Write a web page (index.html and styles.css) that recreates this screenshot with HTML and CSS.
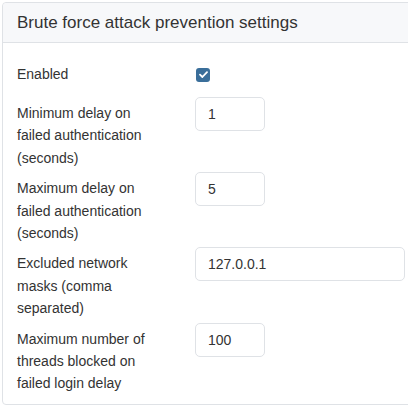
FILE: index.html
```html
<!DOCTYPE html>
<html lang="en">
<head>
<meta charset="utf-8">
<title>Brute force attack prevention settings</title>
<link rel="stylesheet" href="styles.css">
</head>
<body>
<div class="card">
  <div class="card-header">Brute force attack prevention settings</div>
  <div class="card-body">
    <div class="row row-check">
      <label class="label" for="bf-enabled">Enabled</label>
      <div class="control">
        <span class="checkbox" id="bf-enabled">
          <svg width="9" height="7" viewBox="0 0 9 7"><path d="M1 3.6 L3.4 6 L8 1.2" fill="none" stroke="#fff" stroke-width="1.8" stroke-linecap="round" stroke-linejoin="round"/></svg>
        </span>
      </div>
    </div>
    <div class="row">
      <label class="label">Minimum delay on failed authentication (seconds)</label>
      <div class="control"><input class="input input-short" type="text" value="1"></div>
    </div>
    <div class="row">
      <label class="label">Maximum delay on failed authentication (seconds)</label>
      <div class="control"><input class="input input-short" type="text" value="5"></div>
    </div>
    <div class="row">
      <label class="label">Excluded network masks (comma separated)</label>
      <div class="control"><input class="input input-long" type="text" value="127.0.0.1"></div>
    </div>
    <div class="row">
      <label class="label">Maximum number of threads blocked on failed login delay</label>
      <div class="control"><input class="input input-short" type="text" value="100"></div>
    </div>
  </div>
</div>
</body>
</html>
```
FILE: styles.css
```css
html, body {
  margin: 0;
  padding: 0;
  background: #ffffff;
  overflow: hidden;
}
body {
  font-family: "Liberation Sans", Arial, sans-serif;
  font-size: 14px;
  color: #333333;
  padding: 2px 0 0 2px;
}
.card {
  width: 440px;
  border: 1px solid #dfe2e6;
  border-radius: 4px;
  background: #ffffff;
}
.card-header {
  height: 39px;
  line-height: 39px;
  padding: 0 14px;
  background: #f7f8fa;
  border-bottom: 1px solid #dfe2e6;
  border-radius: 4px 4px 0 0;
  font-size: 17px;
  color: #333333;
}
.card-body {
  padding: 15px 13px 9px 14px;
}
.row {
  display: grid;
  grid-template-columns: 178px 210px;
  align-items: start;
  margin-bottom: 3px;
}
.row:last-child {
  margin-bottom: 0;
}
.row-check {
  align-items: center;
  height: 33px;
  margin-bottom: 6px;
}
.label {
  display: block;
  line-height: 22.4px;
  padding-top: 5px;
  padding-right: 30px;
}
.row-check .label {
  padding-top: 0;
}
.control {
  display: flex;
  align-items: center;
}
.checkbox {
  width: 14px;
  height: 14px;
  border-radius: 3px;
  background: #3a6e9a;
  display: flex;
  align-items: center;
  justify-content: center;
  margin-left: 1px;
}
.input {
  box-sizing: border-box;
  height: 34px;
  border: 1px solid #dfe2e6;
  border-radius: 5px;
  padding: 0 12px;
  font-family: inherit;
  font-size: 14px;
  color: #333333;
  background: #ffffff;
  outline: none;
}
.input-short {
  width: 70px;
}
.input-long {
  width: 210px;
}
```
